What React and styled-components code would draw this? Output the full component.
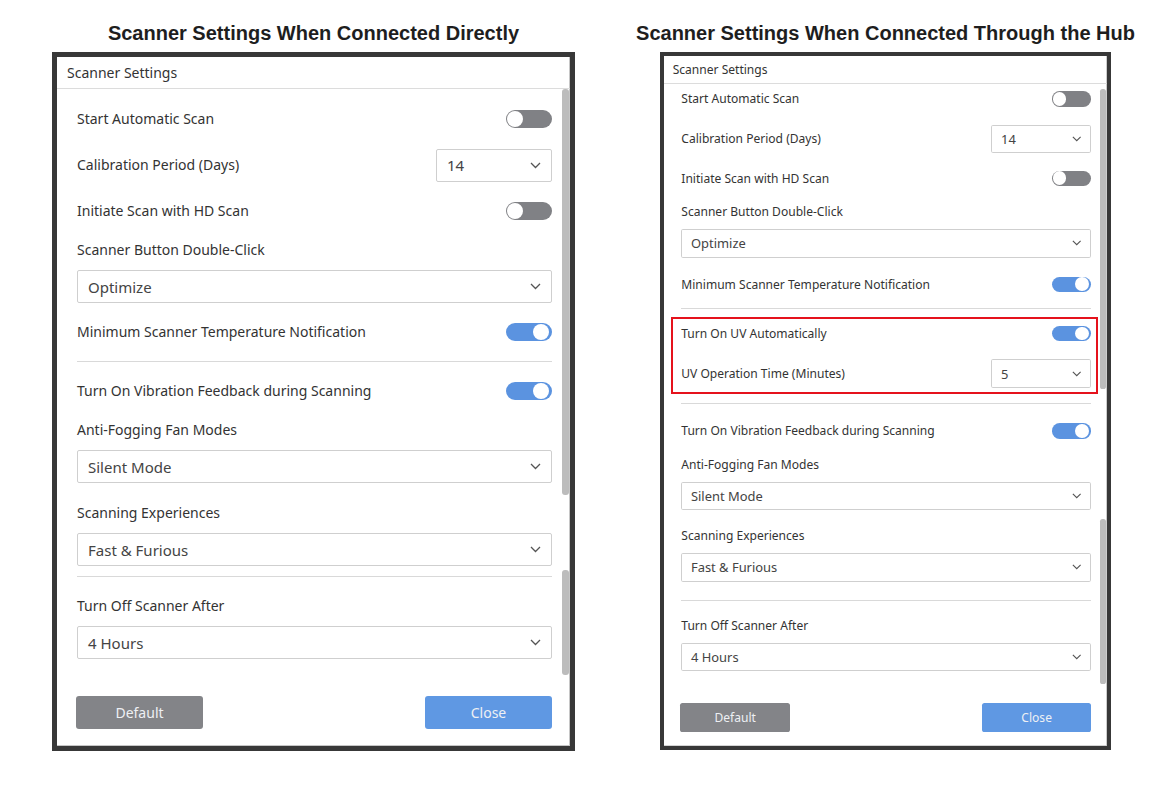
import React from "react";
import styled, { createGlobalStyle } from "styled-components";

const GlobalStyle = createGlobalStyle`
  body {
    margin: 0;
    background: #fff;
    font-family: "Noto Sans", "Open Sans", sans-serif;
  }
`;

const directItems = [
  { type: "toggle", label: "Start Automatic Scan", on: false },
  { type: "selectRow", label: "Calibration Period (Days)", value: "14" },
  { type: "toggle", label: "Initiate Scan with HD Scan", on: false },
  { type: "field", label: "Scanner Button Double-Click", value: "Optimize", mt: 6 },
  { type: "toggle", label: "Minimum Scanner Temperature Notification", on: true, mt: 6 },
  { type: "divider", mt: 6 },
  { type: "toggle", label: "Turn On Vibration Feedback during Scanning", on: true, mt: 6 },
  { type: "field", label: "Anti-Fogging Fan Modes", value: "Silent Mode", mt: 6 },
  { type: "field", label: "Scanning Experiences", value: "Fast & Furious", mt: 20 },
  { type: "divider", mt: 10 },
  { type: "field", label: "Turn Off Scanner After", value: "4 Hours", mt: 19 },
];

const hubItems = [
  { type: "toggle", label: "Start Automatic Scan", on: false },
  { type: "selectRow", label: "Calibration Period (Days)", value: "14" },
  { type: "toggle", label: "Initiate Scan with HD Scan", on: false },
  { type: "field", label: "Scanner Button Double-Click", value: "Optimize", mt: 6 },
  { type: "toggle", label: "Minimum Scanner Temperature Notification", on: true, mt: 8 },
  { type: "divider", mt: 5 },
  {
    type: "highlight",
    mt: 9.3,
    items: [
      { type: "toggle", label: "Turn On UV Automatically", on: true, h: 33 },
      { type: "selectRow", label: "UV Operation Time (Minutes)", value: "5", h: 33, mt: 13.5 },
    ],
  },
  { type: "divider", mt: 10.4 },
  { type: "toggle", label: "Turn On Vibration Feedback during Scanning", on: true, mt: 8 },
  { type: "field", label: "Anti-Fogging Fan Modes", value: "Silent Mode", mt: 6 },
  { type: "field", label: "Scanning Experiences", value: "Fast & Furious", mt: 20 },
  { type: "divider", mt: 21 },
  { type: "field", label: "Turn Off Scanner After", value: "4 Hours", mt: 19 },
];

const Chevron = () => (
  <svg width="11" height="7" viewBox="0 0 11 7">
    <polyline points="1,1 5.5,5.5 10,1" fill="none" stroke="#555" strokeWidth="1.3" />
  </svg>
);

const renderItem = (item, i) => {
  switch (item.type) {
    case "toggle":
      return (
        <Row key={i} $h={item.h} $mt={item.mt}>
          <Label>{item.label}</Label>
          <Switch $on={item.on} />
        </Row>
      );
    case "selectRow":
      return (
        <Row key={i} $h={item.h} $mt={item.mt}>
          <Label>{item.label}</Label>
          <Select $width={116}>
            {item.value}
            <Chevron />
          </Select>
        </Row>
      );
    case "field":
      return (
        <Field key={i} $mt={item.mt}>
          <Label>{item.label}</Label>
          <Select>
            {item.value}
            <Chevron />
          </Select>
        </Field>
      );
    case "divider":
      return <Divider key={i} $mt={item.mt} />;
    case "highlight":
      return (
        <Highlight key={i} $mt={item.mt}>
          {item.items.map(renderItem)}
        </Highlight>
      );
    default:
      return null;
  }
};

const SettingsWindow = ({ items, zoom = 1, height, offset, thumbs }) => (
  <Window $zoom={zoom} $height={height}>
    <TitleBar>Scanner Settings</TitleBar>
    <Body>
      <Content $offset={offset}>{items.map(renderItem)}</Content>
      {thumbs.map(([top, h], i) => (
        <Thumb key={i} $top={top} $h={h} />
      ))}
    </Body>
    <Footer>
      <Button $kind="default">Default</Button>
      <Button $kind="primary">Close</Button>
    </Footer>
  </Window>
);

const App = () => (
  <>
    <GlobalStyle />
    <Page>
      <Column $width={523}>
        <Caption>Scanner Settings When Connected Directly</Caption>
        <SettingsWindow
          items={directItems}
          height={699}
          offset={7}
          thumbs={[
            [0, 406],
            [481, 105],
          ]}
        />
      </Column>
      <Column $width={451}>
        <Caption>Scanner Settings When Connected Through the Hub</Caption>
        <SettingsWindow
          items={hubItems}
          zoom={0.862}
          height={810}
          offset={-5}
          thumbs={[
            [6, 348],
            [505, 191],
          ]}
        />
      </Column>
    </Page>
  </>
);

const Page = styled.div`
  display: flex;
  align-items: flex-start;
  gap: 85px;
  padding: 20px 0 0 52px;
`;

const Column = styled.section`
  flex: none;
  width: ${(p) => p.$width}px;
  display: flex;
  flex-direction: column;
  align-items: center;
`;

const Caption = styled.h2`
  margin: 0 0 6px;
  font: bold 20px/26px "Liberation Sans", Arial, sans-serif;
  color: #1e1e1e;
  white-space: nowrap;
`;

const Window = styled.div`
  zoom: ${(p) => p.$zoom};
  width: 523px;
  height: ${(p) => p.$height}px;
  box-sizing: border-box;
  border: 5px solid #383838;
  background: #fff;
  display: flex;
  flex-direction: column;
  box-shadow: inset -1px -1px 0 #c6c6c6;
`;

const TitleBar = styled.div`
  height: 32px;
  flex: none;
  box-sizing: border-box;
  display: flex;
  align-items: center;
  padding-left: 10px;
  border-bottom: 1px solid #dcdcdc;
  font-size: 14px;
  color: #333;
`;

const Body = styled.div`
  flex: 1;
  position: relative;
  overflow: hidden;
`;

const Content = styled.div`
  display: flex;
  flex-direction: column;
  padding: 0 18px 0 20px;
  margin-top: ${(p) => p.$offset}px;
`;

const Thumb = styled.div`
  position: absolute;
  right: 1px;
  width: 7px;
  top: ${(p) => p.$top}px;
  height: ${(p) => p.$h}px;
  border-radius: 3px;
  background: #bcbcbc;
`;

const Row = styled.div`
  display: flex;
  align-items: center;
  justify-content: space-between;
  height: ${(p) => p.$h || 46}px;
  margin-top: ${(p) => p.$mt || 0}px;
`;

const Label = styled.div`
  font-size: 14px;
  line-height: 20px;
  color: #333;
`;

const Switch = styled.div`
  position: relative;
  width: 46px;
  height: 18px;
  border-radius: 9px;
  background: ${(p) => (p.$on ? "#5b93e0" : "#808185")};

  &::after {
    content: "";
    position: absolute;
    top: 1px;
    left: ${(p) => (p.$on ? "27px" : "1px")};
    width: 16px;
    height: 16px;
    border-radius: 50%;
    background: #fff;
  }
`;

const Select = styled.div`
  box-sizing: border-box;
  width: ${(p) => (p.$width ? `${p.$width}px` : "100%")};
  height: 33px;
  display: flex;
  align-items: center;
  justify-content: space-between;
  padding: 0 10px 0 10px;
  border: 1px solid #cfcfcf;
  border-radius: 2px;
  background: #fff;
  font-size: 15px;
  color: #444;
`;

const Field = styled.div`
  display: flex;
  flex-direction: column;
  gap: 10px;
  margin-top: ${(p) => p.$mt || 0}px;
`;

const Divider = styled.div`
  height: 1px;
  background: #d9d9d9;
  margin-top: ${(p) => p.$mt || 0}px;
`;

const Highlight = styled.div`
  border: 2.4px solid #e5121c;
  margin: ${(p) => p.$mt || 0}px -8px 0 -12px;
  padding: 0 5.6px 5.1px 9.6px;
`;

const Footer = styled.div`
  flex: none;
  display: flex;
  justify-content: space-between;
  padding: 16px 18px 17px 19px;
`;

const Button = styled.div`
  width: 127px;
  height: 33px;
  display: flex;
  align-items: center;
  justify-content: center;
  border-radius: 3px;
  font-size: 14px;
  color: #eef0f4;
  background: ${(p) => (p.$kind === "primary" ? "#5f98e3" : "#838488")};
`;

export default App;
